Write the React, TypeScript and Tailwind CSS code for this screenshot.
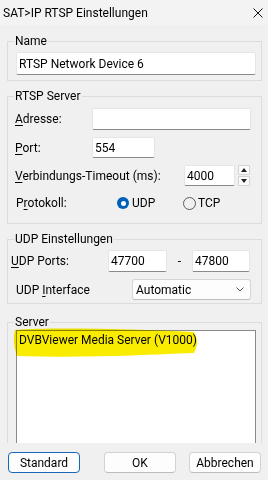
import React from 'react';

const Key = ({ children }: { children: React.ReactNode }) => (
  <span className="underline decoration-1 underline-offset-[2px]">{children}</span>
);

const Edit = ({ value = '', className = '' }: { value?: string; className?: string }) => (
  <div
    className={`flex items-center bg-white border border-[#e5e5e5] border-b-[#8a8a8a] rounded-[2px] pl-[2px] ${className}`}
  >
    {value}
  </div>
);

const Group = ({ title, className = '', children }: { title: string; className?: string; children: React.ReactNode }) => (
  <fieldset className={`border border-[#dcdcdc] ${className}`}>
    <legend className="ml-[6px] px-[1px] leading-[16px]">{title}</legend>
    {children}
  </fieldset>
);

const Spinner = () => (
  <div className="flex flex-col gap-[1px] ml-[3px]">
    {[0, 1].map((i) => (
      <div key={i} className="w-[12px] h-[10px] flex items-center justify-center bg-[#fbfbfb] border border-[#d3d3d3] rounded-[1px]">
        <svg width="6" height="4" viewBox="0 0 6 4">
          <path d={i === 0 ? 'M0 4 L3 0 L6 4 Z' : 'M0 0 L3 4 L6 0 Z'} fill="#222" />
        </svg>
      </div>
    ))}
  </div>
);

const Button = ({ label, primary = false, className = '' }: { label: string; primary?: boolean; className?: string }) => (
  <button
    className={`h-[21px] w-[72px] rounded-[4px] bg-[#fdfdfd] flex items-center justify-center border ${
      primary ? 'border-[#1766b8]' : 'border-[#d2d2d2] border-b-[#bdbdbd]'
    } ${className}`}
  >
    {label}
  </button>
);

export default function App() {
  return (
    <div className="relative w-[268px] h-[480px] overflow-hidden flex flex-col bg-[#f0f0f0] text-[12px] text-black font-['Roboto',sans-serif]">
      {/* title bar */}
      <div className="h-[25px] shrink-0 flex items-center justify-between pl-[3px] pr-[5px] bg-[#f3f3f3]">
        <span className="leading-[16px] mt-[1px]">SAT&gt;IP RTSP Einstellungen</span>
        <svg width="10" height="10" viewBox="0 0 10 10" className="mt-[1px]">
          <path d="M0.5 0.5 L9.5 9.5 M9.5 0.5 L0.5 9.5" stroke="#111" strokeWidth="1" />
        </svg>
      </div>

      <div className="flex-1 min-h-0 flex flex-col pl-[7px] pr-[6px]">
        <Group title="Name" className="mt-[8px] pb-[5px]">
          <Edit value="RTSP Network Device 6" className="mt-[3px] ml-[8px] mr-[5px] h-[23px] pl-[1px]" />
        </Group>

        <Group title="RTSP Server" className="mt-[7px] pb-[10px]">
          <div className="flex items-center mt-[4px] pl-[7px]">
            <span className="w-[77px]"><Key>A</Key>dresse:</span>
            <Edit className="w-[159px] h-[22px]" />
          </div>
          <div className="flex items-center mt-[7px] pl-[7px]">
            <span className="w-[77px]"><Key>P</Key>ort:</span>
            <Edit value="554" className="w-[63px] h-[21px]" />
          </div>
          <div className="flex items-center mt-[7px] pl-[7px]">
            <span className="w-[169px]"><Key>V</Key>erbindungs-Timeout (ms):</span>
            <Edit value="4000" className="w-[51px] h-[21px] pl-[1px]" />
            <Spinner />
          </div>
          <div className="flex items-center h-[20px] mt-[7px] pl-[8px]">
            <span className="w-[101px]">P<Key>r</Key>otokoll:</span>
            <div className="w-[66px] flex items-center">
              <span className="w-[12px] h-[12px] rounded-full bg-[#005fb8] flex items-center justify-center">
                <span className="w-[5px] h-[5px] rounded-full bg-white" />
              </span>
              <span className="ml-[3px]">UDP</span>
            </div>
            <div className="flex items-center">
              <span className="w-[13px] h-[13px] rounded-full border border-[#5c5c5c]" />
              <span className="ml-[2px]">TCP</span>
            </div>
          </div>
        </Group>

        <Group title="UDP Einstellungen" className="mt-[7px] pb-[3px]">
          <div className="flex items-center mt-[3px] pl-[3px]">
            <span className="w-[97px]"><Key>U</Key>DP Ports:</span>
            <Edit value="47700" className="w-[59px] h-[22px]" />
            <span className="w-[25px] text-center">-</span>
            <Edit value="47800" className="w-[58px] h-[22px]" />
          </div>
          <div className="flex items-center mt-[7px] pl-[8px]">
            <span className="w-[116px]">UDP <Key>I</Key>nterface</span>
            <div className="w-[119px] h-[21px] flex items-center justify-between pl-[3px] pr-[6px] bg-[#fdfdfd] border border-[#d5d5d5] border-b-[#bcbcbc] rounded-[3px]">
              <span>Automatic</span>
              <svg width="8" height="5" viewBox="0 0 8 5">
                <path d="M0.5 0.5 L4 4 L7.5 0.5" fill="none" stroke="#555" strokeWidth="1" />
              </svg>
            </div>
          </div>
        </Group>

        <div className="flex-1 min-h-0 overflow-hidden mt-[10px]">
          <Group title="Server" className="h-[200px]">
            <div className="ml-[8px] mr-[5px] h-[170px] bg-white border border-[#8a8a8a] pl-[2px] pt-[1px] leading-[16px]">
              DVBViewer Media Server (V1000)
            </div>
          </Group>
        </div>
      </div>

      {/* button row */}
      <div className="h-[37px] shrink-0 flex items-start pt-[9px] pl-[8px]">
        <Button label="Standard" primary />
        <Button label="OK" className="ml-[24px]" />
        <Button label="Abbrechen" className="ml-[13px]" />
      </div>

      {/* marker highlight drawn over the list entry */}
      <svg
        className="absolute left-[13px] top-[327px] mix-blend-multiply pointer-events-none"
        width="186"
        height="32"
        viewBox="0 0 186 32"
      >
        <path
          d="M2 3 C40 0 120 2 181 5 Q187 15 181 26 C130 28 70 31 4 29 Q-1 16 2 3 Z"
          fill="#f9ec00"
        />
      </svg>
    </div>
  );
}
